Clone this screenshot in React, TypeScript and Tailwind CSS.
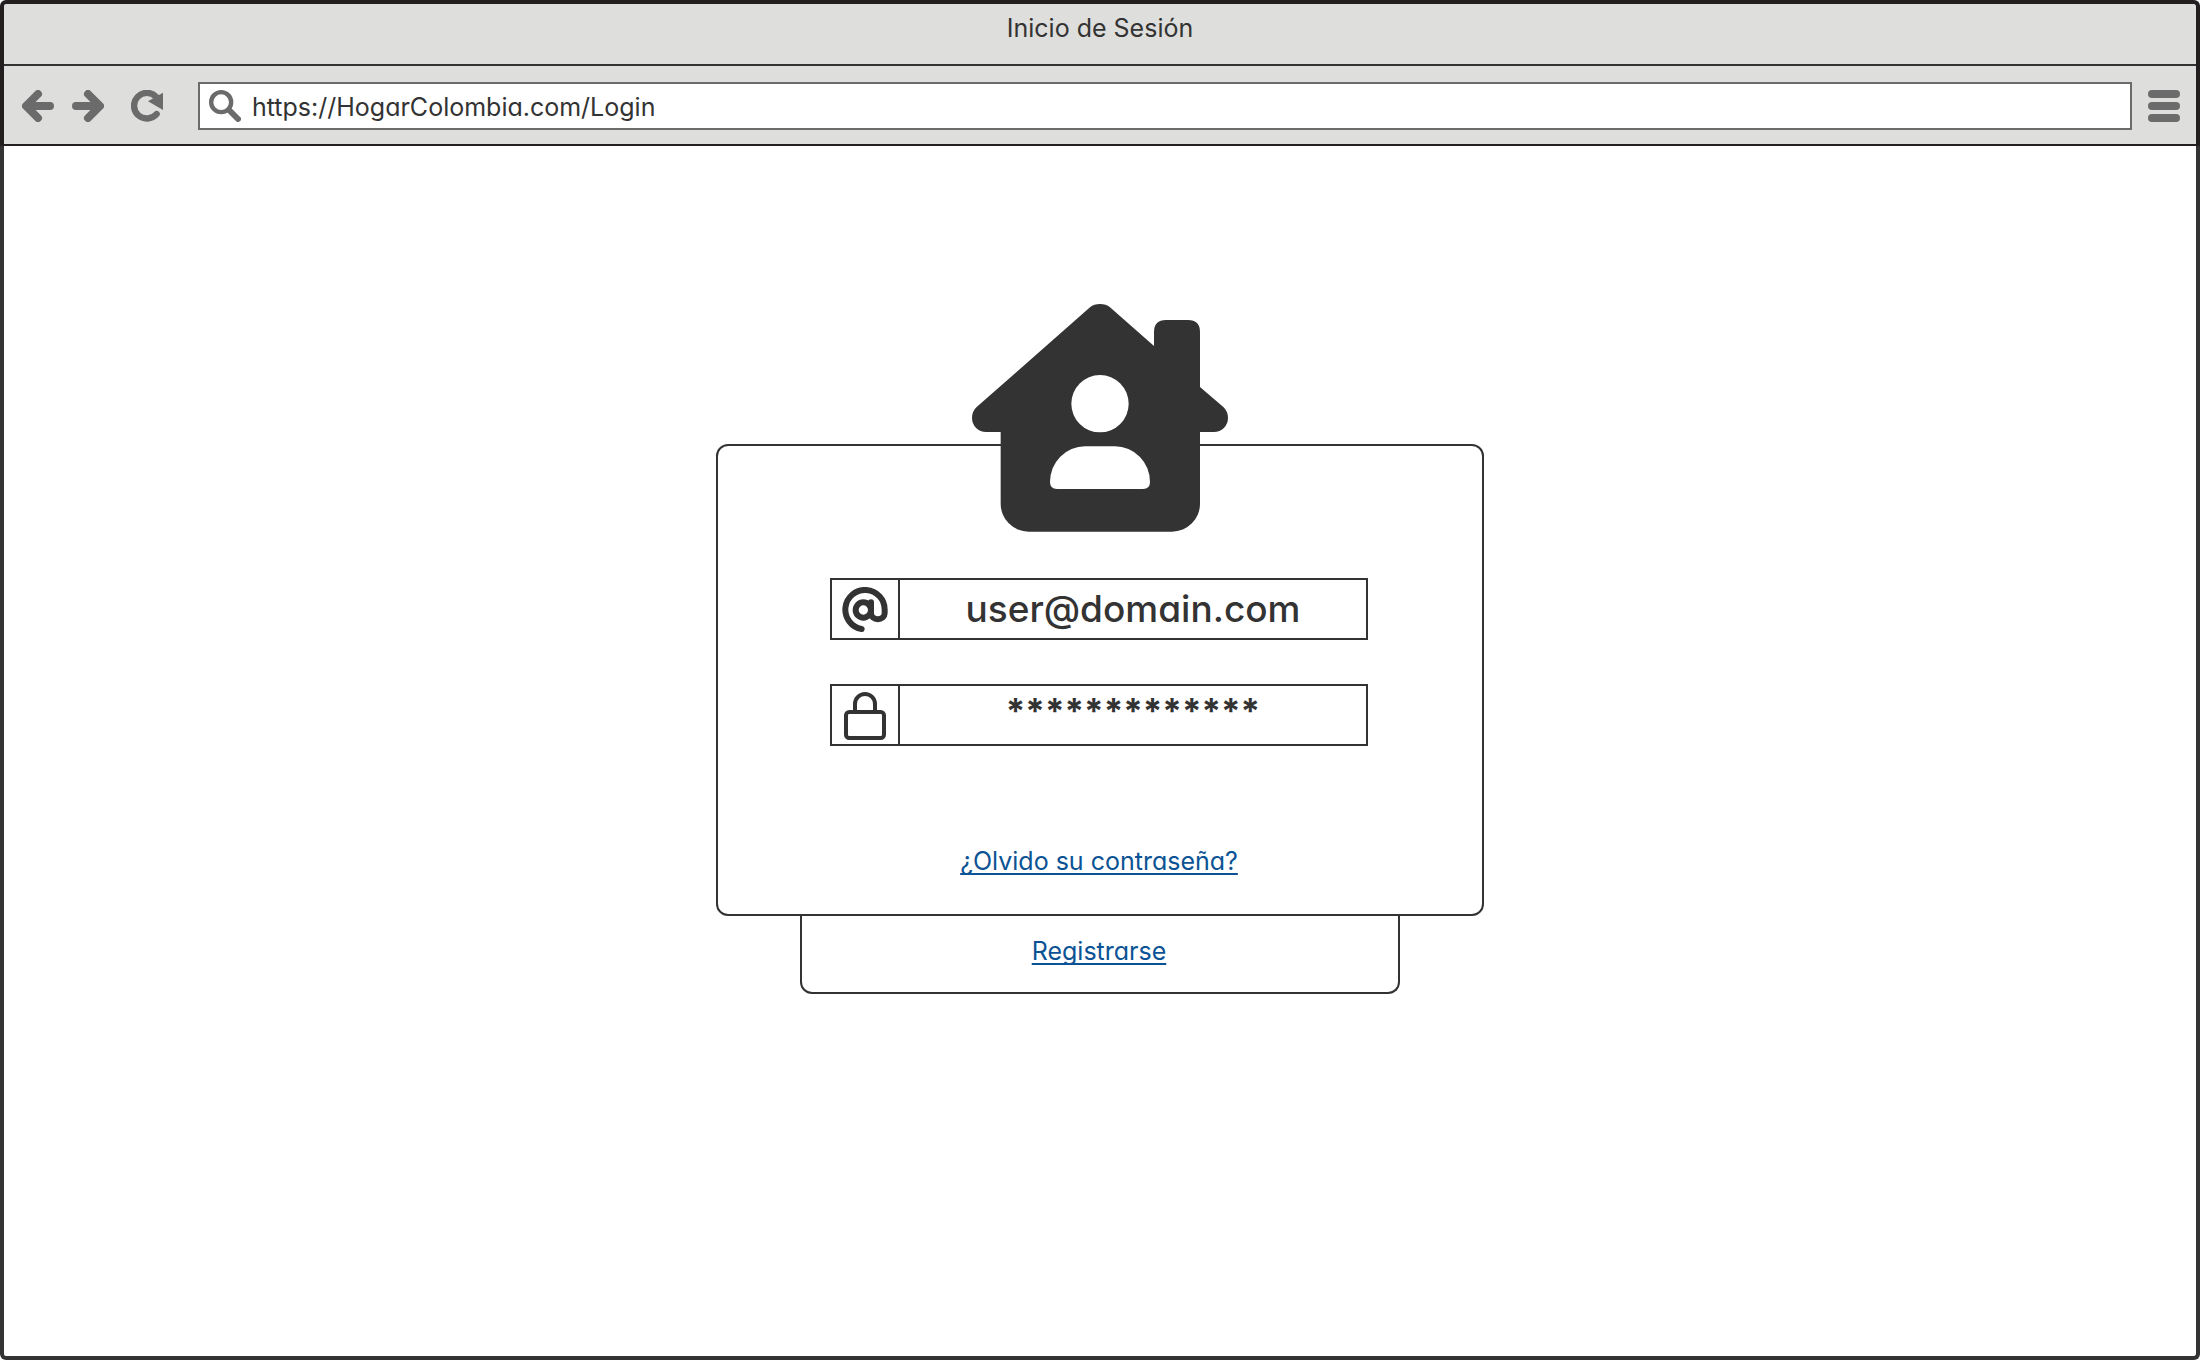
function BackIcon() {
  return (
    <svg viewBox="36 42 96 96" className="size-8" fill="none" stroke="currentColor" strokeWidth="24" strokeLinecap="round" strokeLinejoin="round" aria-hidden="true">
      <path d="M84 54 48 90l36 36M52 90h68" />
    </svg>
  );
}

function ForwardIcon() {
  return (
    <svg viewBox="0 0 96 96" className="size-8" fill="none" stroke="currentColor" strokeWidth="24" strokeLinecap="round" strokeLinejoin="round" aria-hidden="true">
      <path d="M48 12 84 48 48 84M12 48h68" />
    </svg>
  );
}

function ReloadIcon() {
  return (
    <svg viewBox="363 42 96 96" className="size-8" fill="none" aria-hidden="true">
      <path d="M440 114A38.500 38.500 0 1 1 438 62" stroke="currentColor" strokeWidth="19" strokeLinecap="round" />
      <path d="M459 50v52l-45-26z" fill="currentColor" />
    </svg>
  );
}

function SearchIcon() {
  return (
    <svg viewBox="597 41 96 96" className="size-8 shrink-0" fill="none" stroke="currentColor" aria-hidden="true">
      <circle cx="633.5" cy="77.500" r="30" strokeWidth="13" />
      <path d="M660 104l24 24" strokeWidth="18" strokeLinecap="round" />
    </svg>
  );
}

function MenuIcon() {
  return (
    <svg viewBox="0 0 32 32" className="size-8" fill="currentColor" aria-hidden="true">
      <rect width="32" height="8" rx="4" />
      <rect y="12" width="32" height="8" rx="4" />
      <rect y="24" width="32" height="8" rx="4" />
    </svg>
  );
}

function HouseUserIcon() {
  return (
    <svg viewBox="66 42 768 684" className="w-64 h-[228px]" aria-hidden="true">
      <path
        fill="#333333"
        d="M450 42Q468 42 480 52L612 168V126Q612 90 648 90H714Q750 90 750 126V291L820 351Q834 364 834 384A42 42 0 0 1 792 426H750V640A84 84 0 0 1 666 725H236A84 84 0 0 1 152 640V426H108A42 42 0 0 1 66 384Q66 364 80 351L420 52Q432 42 450 42Z"
      />
      <circle cx="450" cy="341" r="86" fill="#fff" />
      <path fill="#fff" d="M405 469H495A105 107 0 0 1 600 576Q600 597 579 597H321Q300 597 300 576A105 107 0 0 1 405 469Z" />
    </svg>
  );
}

function AtIcon() {
  return (
    <svg viewBox="49 51 138 138" className="size-[46px]" fill="none" stroke="currentColor" strokeWidth="18" strokeLinecap="round" strokeLinejoin="round" aria-hidden="true">
      <circle cx="113" cy="120" r="23" />
      <path d="M136 97V130A20 17 0 0 0 177 130V120A59 59 0 1 0 108 177" />
    </svg>
  );
}

function LockIcon() {
  return (
    <svg viewBox="60 366 126 144" className="w-[42px] h-12" fill="none" stroke="currentColor" strokeWidth="12" aria-hidden="true">
      <rect x="66" y="426" width="114" height="78" rx="10" />
      <path d="M93 424V402A30 30 0 0 1 153 402V424" />
    </svg>
  );
}

const field = "flex h-[62px] w-full border-2 border-[#333333] bg-white";
const fieldIcon = "flex w-[68px] items-center justify-center border-r-2 border-[#333333] pt-0.5";
const link = "text-[25px] leading-8 text-[#0b5394] underline decoration-2 underline-offset-3 [text-decoration-skip-ink:none]";

export default function App() {
  return (
    <div className="flex min-h-screen flex-col bg-white text-[#333333] [font-family:Inter,'Liberation_Sans',sans-serif] [font-feature-settings:'cv11']">
      <header className="rounded-t-md border-x-4 border-t-4 border-[#231f20] bg-[#dededc]">
        <h1 className="h-[62px] border-b-2 border-[#333333] pt-2 text-center text-[25px] leading-8">
          Inicio de Sesión
        </h1>
        <nav className="flex h-20 items-center border-b-2 border-[#231f20] pt-0.5 pr-4 pl-[18px] text-[#6b6b6b]" aria-label="Navegador">
          <button type="button" aria-label="Atrás">
            <BackIcon />
          </button>
          <button type="button" aria-label="Adelante" className="ml-[18px]">
            <ForwardIcon />
          </button>
          <button type="button" aria-label="Recargar" className="ml-[27px]">
            <ReloadIcon />
          </button>
          <label className="mr-4 ml-[35px] flex h-12 flex-1 items-center gap-[11px] border-2 border-[#6b6b6b] bg-white pl-[9px]">
            <SearchIcon />
            <input
              type="text"
              aria-label="Dirección"
              defaultValue="https://HogarColombia.com/Login"
              className="min-w-0 flex-1 pt-0.5 text-[25px] leading-8 text-[#333333] outline-none"
            />
          </label>
          <button type="button" aria-label="Menú">
            <MenuIcon />
          </button>
        </nav>
      </header>

      <main className="flex flex-1 flex-col items-center rounded-b-md border-x-4 border-b-4 border-[#333333] px-4 pt-[298px] pb-16">
        <form className="flex w-full max-w-3xl flex-col items-center rounded-xl border-2 border-[#333333] px-8 pb-[37px]">
          <div className="-mt-[142px]">
            <HouseUserIcon />
          </div>
          <div className="mt-[46px] mr-0.5 flex w-full max-w-[538px] flex-col gap-11">
            <div className={field}>
              <label htmlFor="email" aria-label="Correo electrónico" className={fieldIcon}>
                <AtIcon />
              </label>
              <input id="email" type="email" defaultValue="user@domain.com" className="min-w-0 flex-1 text-center text-[37px] font-medium outline-none" />
            </div>
            <div className={field}>
              <label htmlFor="password" aria-label="Contraseña" className={fieldIcon}>
                <LockIcon />
              </label>
              <input id="password" type="text" defaultValue="*************" className="min-w-0 flex-1 pb-2 text-center text-[35px] font-bold outline-none" />
            </div>
          </div>
          <a href="#recuperar" className={`mt-[99px] mr-0.5 ${link}`}>
            ¿Olvido su contraseña?
          </a>
        </form>
        <div className="flex w-full max-w-[600px] justify-center rounded-b-xl border-x-2 border-b-2 border-[#333333] pt-[19px] pb-[25px]">
          <a href="#registro" className={`mr-0.5 ${link}`}>
            Registrarse
          </a>
        </div>
      </main>
    </div>
  );
}
